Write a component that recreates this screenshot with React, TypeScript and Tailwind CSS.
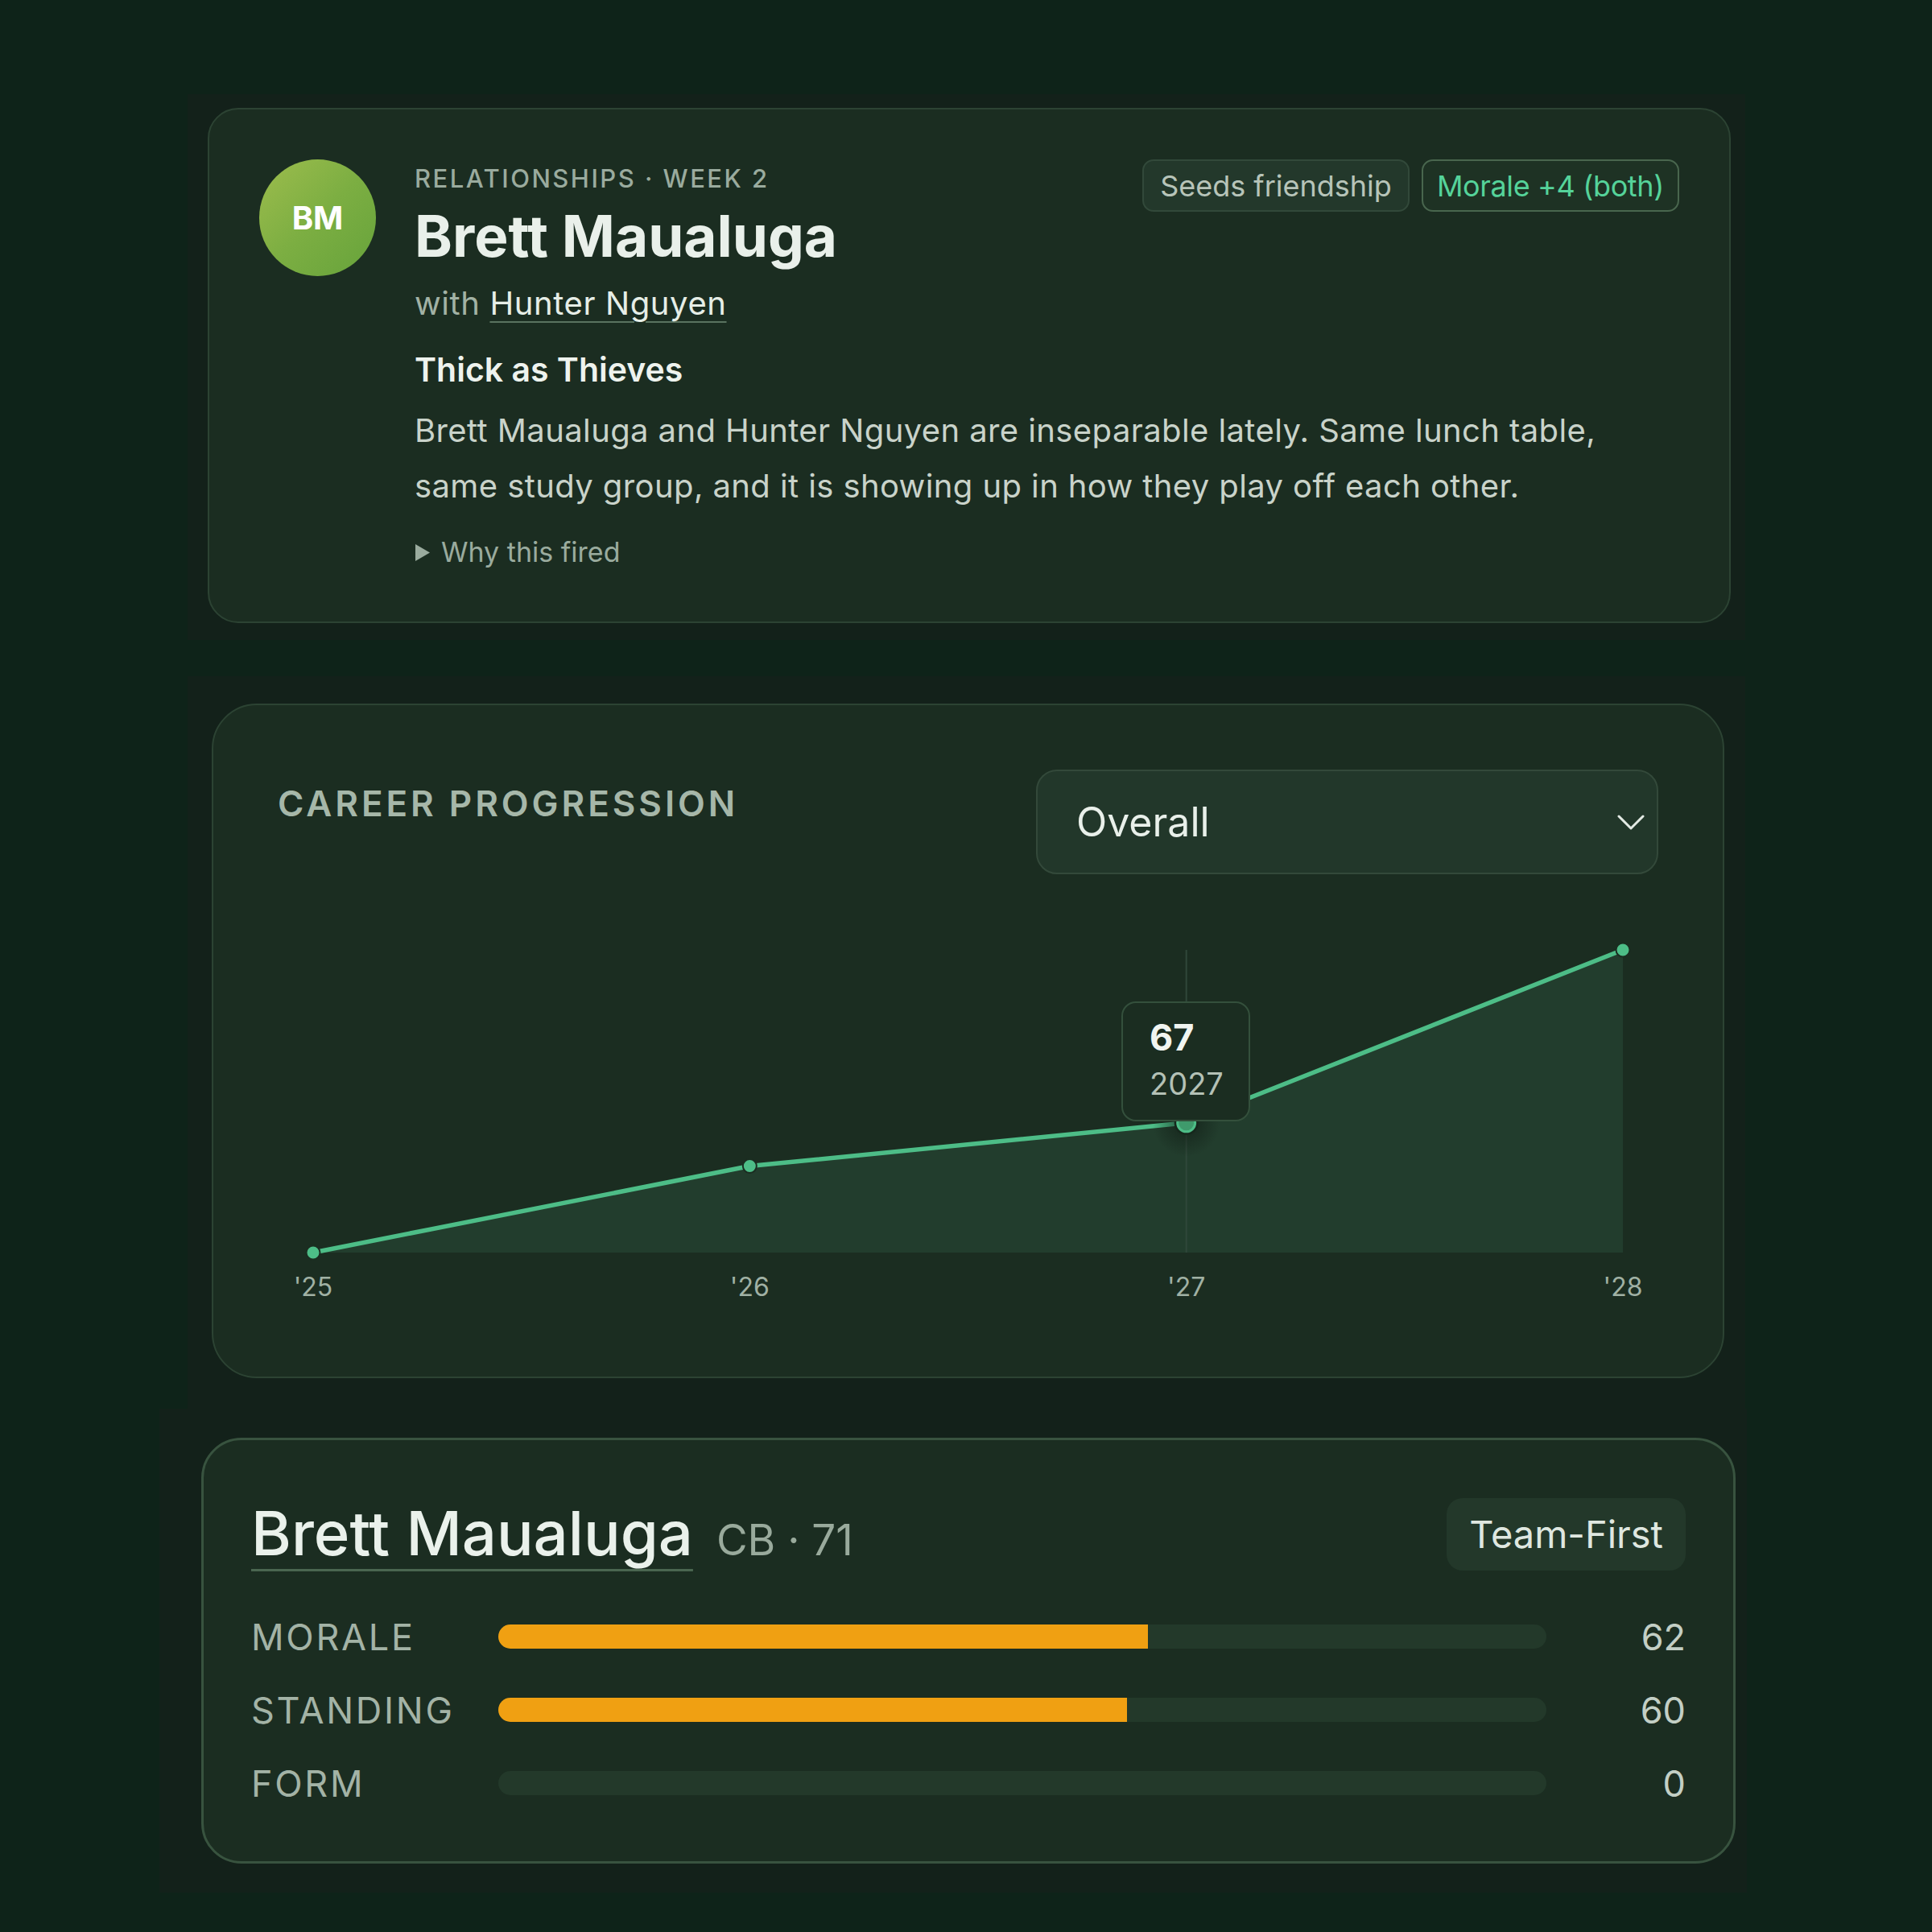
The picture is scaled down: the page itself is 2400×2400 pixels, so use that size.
const career = [
  { year: 2025, label: "'25", ovr: 64 },
  { year: 2026, label: "'26", ovr: 66 },
  { year: 2027, label: "'27", ovr: 67 },
  { year: 2028, label: "'28", ovr: 71 },
];

const meters = [
  { label: 'MORALE', value: 62 },
  { label: 'STANDING', value: 60 },
  { label: 'FORM', value: 0 },
];

// chart geometry (px inside the svg)
const CHART_W = 1715;
const CHART_H = 500;
const PAD_X = 44;
const TOP_Y = 50;
const BASE_Y = 426;
const ACTIVE = 2;

function px(i: number) {
  return PAD_X + (i * (CHART_W - PAD_X * 2)) / (career.length - 1);
}

function py(v: number) {
  const min = Math.min(...career.map((d) => d.ovr));
  const max = Math.max(...career.map((d) => d.ovr));
  return TOP_Y + ((max - v) / (max - min)) * (BASE_Y - TOP_Y);
}

function EventCard() {
  return (
    <div className="rounded-[38px] border-2 border-[#2c4333] bg-[#1b2d21] p-[62px] pb-[64px] flex gap-[48px]">
      <div className="w-[145px] h-[145px] shrink-0 rounded-full bg-linear-to-br from-[#9dbd4d] via-[#7cae42] to-[#66a33b] flex items-center justify-center">
        <span className="text-[40px] font-bold text-white leading-none">BM</span>
      </div>
      <div className="flex-1">
        <div className="flex items-start justify-between">
          <div>
            <div className="text-[31px] leading-[48px] tracking-[0.08em] text-[#9aab9e] font-medium">
              RELATIONSHIPS · WEEK 2
            </div>
            <h1 className="mt-[7px] text-[71px] leading-[80px] font-bold text-[#e9f0ea]">
              Brett Maualuga
            </h1>
            <div className="mt-[20px] text-[40px] leading-[48px] tracking-[0.015em] text-[#a2b2a5]">
              with{' '}
              <span className="text-[#e6eee7] underline decoration-[#5a7360] decoration-2 underline-offset-[8px]">
                Hunter Nguyen
              </span>
            </div>
          </div>
          <div className="flex gap-[15px]">
            <span className="h-[65px] px-[20px] flex items-center rounded-[14px] border-2 border-[#32493a] bg-[#23382b] text-[36px] text-[#b7c4b9]">
              Seeds friendship
            </span>
            <span className="h-[65px] px-[17px] flex items-center rounded-[14px] border-2 border-[#49664e] bg-[#1e3224] text-[36px] tracking-[-0.01em] text-[#55d39a]">
              Morale +4 (both)
            </span>
          </div>
        </div>
        <h2 className="mt-[34px] text-[41px] leading-[48px] font-semibold text-[#eef3ee]">Thick as Thieves</h2>
        <p className="mt-[17px] text-[40px] leading-[69px] tracking-[0.01em] text-[#c9d3ca]">
          Brett Maualuga and Hunter Nguyen are inseparable lately. Same lunch table,
          <br />
          same study group, and it is showing up in how they play off each other.
        </p>
        <div className="mt-[26px] flex items-center gap-[13px] text-[34px] leading-[44px] text-[#9aab9e]">
          <svg width="20" height="23" viewBox="0 0 20 23">
            <path d="M1 1 L19 11.5 L1 22 Z" fill="#9aab9e" />
          </svg>
          <span>Why this fired</span>
        </div>
      </div>
    </div>
  );
}

function CareerChart() {
  const pts = career.map((d, i) => [px(i), py(d.ovr)]);
  const line = pts.map(([x, y]) => `${x},${y}`).join(' ');
  const area = `${PAD_X},${BASE_Y} ${line} ${px(career.length - 1)},${BASE_Y}`;
  const [ax, ay] = pts[ACTIVE];

  return (
    <div className="relative mt-[44px]" style={{ width: CHART_W, height: CHART_H }}>
      <svg width={CHART_W} height={CHART_H} viewBox={`0 0 ${CHART_W} ${CHART_H}`}>
        <defs>
          <radialGradient id="glow">
            <stop offset="0%" stopColor="#0f1a13" stopOpacity="0.7" />
            <stop offset="100%" stopColor="#0f1a13" stopOpacity="0" />
          </radialGradient>
        </defs>
        <polygon points={area} fill="#223d2d" />
        <line x1={ax} y1={TOP_Y} x2={ax} y2={BASE_Y} stroke="#30473a" strokeWidth="2" />
        <polyline points={line} fill="none" stroke="#4dbd87" strokeWidth="5.5" strokeLinejoin="round" />
        {pts.map(([x, y], i) =>
          i === ACTIVE ? null : <circle key={i} cx={x} cy={y} r="8.5" fill="#4dbd87" stroke="#1b2d21" strokeWidth="2" />
        )}
        <circle cx={ax} cy={ay} r="42" fill="url(#glow)" />
        <circle cx={ax} cy={ay} r="15" fill="#16271c" />
        <circle cx={ax} cy={ay} r="11" fill="#3f9a6c" stroke="#4dbd87" strokeWidth="3" />
        {career.map((d, i) => (
          <text
            key={d.year}
            x={px(i)}
            y="480"
            textAnchor="middle"
            fontSize="32"
            fill="#a0b1a4"
            fontFamily="Inter, sans-serif"
          >
            {d.label}
          </text>
        ))}
      </svg>
      <div className="absolute left-[1048px] top-[114px] w-[160px] rounded-[18px] border-2 border-[#34503c] bg-[#1b2d21] pl-[33px] pt-[17px] pb-[21px]">
        <div className="text-[45px] leading-[52px] font-bold text-[#f1f5f1]">{career[ACTIVE].ovr}</div>
        <div className="mt-[7px] text-[38px] leading-[48px] text-[#b4c1b6]">{career[ACTIVE].year}</div>
      </div>
    </div>
  );
}

function ProgressionCard() {
  return (
    <div className="rounded-[56px] border-2 border-[#2c4333] bg-[#1b2d21] p-[80px]">
      <div className="flex items-start justify-between">
        <div className="mt-[16px] text-[44px] leading-[52px] font-semibold tracking-[0.09em] text-[#a6b7a9]">
          CAREER PROGRESSION
        </div>
        <div className="w-[773px] h-[130px] rounded-[26px] border-2 border-[#33493a] bg-[#22372a] pl-[48px] pr-[15px] flex items-center justify-between">
          <span className="text-[50px] text-[#e9f0ea]">Overall</span>
          <svg width="34" height="20" viewBox="0 0 34 20" className="mt-[2px]">
            <polyline points="2,2 17,17 32,2" fill="none" stroke="#e3eae4" strokeWidth="3" strokeLinecap="round" strokeLinejoin="round" />
          </svg>
        </div>
      </div>
      <CareerChart />
    </div>
  );
}

function PlayerCard() {
  return (
    <div className="rounded-[50px] border-[3px] border-[#38533f] bg-[#1b2d21] pt-[70px] pb-[70px] pl-[59px] pr-[59px]">
      <div className="flex items-center justify-between">
        <div className="flex items-baseline gap-[29px]">
          <span className="text-[76px] leading-[90px] font-medium text-[#eaf1eb] underline decoration-[#4a6650] decoration-[3px] underline-offset-[17px]">
            Brett Maualuga
          </span>
          <span className="text-[53px] text-[#99aa9c]">CB · 71</span>
        </div>
        <span className="h-[90px] px-[28px] flex items-center rounded-[20px] bg-[#23382a] text-[47px] text-[#dfe7e0]">
          Team-First
        </span>
      </div>
      <div className="mt-[46px] flex flex-col gap-[31px]">
        {meters.map((m) => (
          <div key={m.label} className="grid grid-cols-[307px_1fr_173px] items-center h-[60px]">
            <span className="text-[45px] tracking-[0.06em] text-[#a3b3a6]">{m.label}</span>
            <div className="h-[30px] rounded-full bg-[#23392a] overflow-hidden">
              <div className="h-full bg-[#f0a012]" style={{ width: `${m.value}%` }} />
            </div>
            <span className="text-right text-[45px] text-[#c3cfc5]">{m.value}</span>
          </div>
        ))}
      </div>
    </div>
  );
}

export default function App() {
  return (
    <div className="w-[2400px] h-[2400px] bg-[#0e2319] pt-[117px] font-[family-name:Inter,sans-serif]">
      <section className="ml-[233px] w-[1935px] bg-[#13211a] pt-[17px] pb-[21px] pl-[25px] pr-[18px]">
        <EventCard />
      </section>
      <section className="mt-[45px] ml-[233px] w-[1935px] bg-[#13211a] pt-[34px] pb-[38px] pl-[30px] pr-[26px]">
        <ProgressionCard />
      </section>
      <section className="ml-[198px] w-[1972px] bg-[#13211a] pt-[36px] pb-[36px] pl-[52px] pr-[14px]">
        <PlayerCard />
      </section>
    </div>
  );
}
